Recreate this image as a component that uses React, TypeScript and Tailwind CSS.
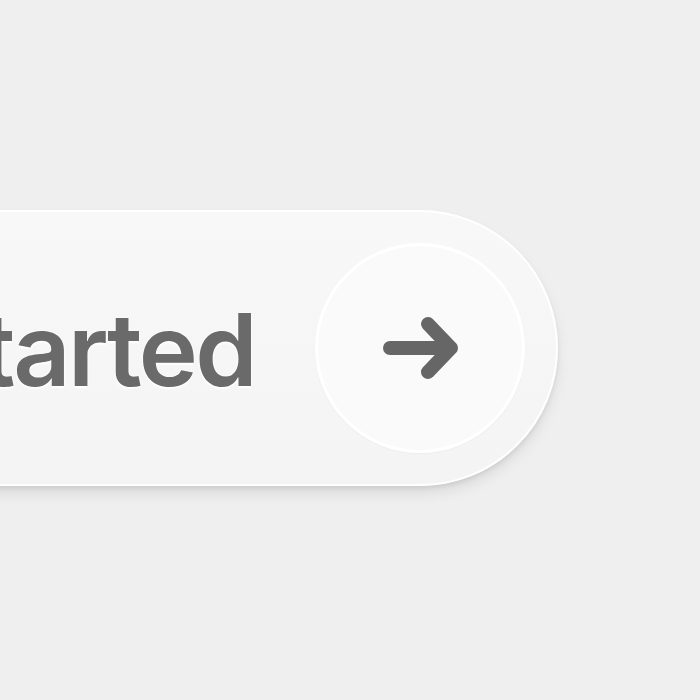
import React from "react";

export default function App() {
  return (
    <div className="flex h-[700px] w-[700px] items-center justify-end overflow-hidden bg-[#efefef] pr-[142px] pb-[4px]">
      <button
        className="flex h-[276px] shrink-0 items-center gap-[60px] rounded-full border-2 border-white bg-gradient-to-b from-[#f8f8f8] to-[#f4f4f4] pl-[120px] pr-[31px] shadow-[0_8px_14px_rgba(0,0,0,0.08),0_3px_4px_rgba(0,0,0,0.07)]"
      >
        <span
          className="whitespace-nowrap pt-[4px] text-[100px] font-[560] leading-none tracking-[-2.6px] text-[#6a6a6a] [text-shadow:0_0_3px_#fff,0_2px_2px_#fff]"
          style={{ fontFamily: "Inter, 'Noto Sans', sans-serif" }}
        >
          Get started
        </span>
        <span className="flex h-[210px] w-[210px] shrink-0 items-center justify-center rounded-full border-[3px] border-white bg-[#fafafa] shadow-[0_1px_2px_rgba(0,0,0,0.03)]">
          <svg width="100" height="100" viewBox="0 0 100 100" fill="none">
            <path
              d="M20 50 H81 M58 26 L81 50 L58 74"
              stroke="#666666"
              strokeWidth="14"
              strokeLinecap="round"
              strokeLinejoin="round"
            />
          </svg>
        </span>
      </button>
    </div>
  );
}
